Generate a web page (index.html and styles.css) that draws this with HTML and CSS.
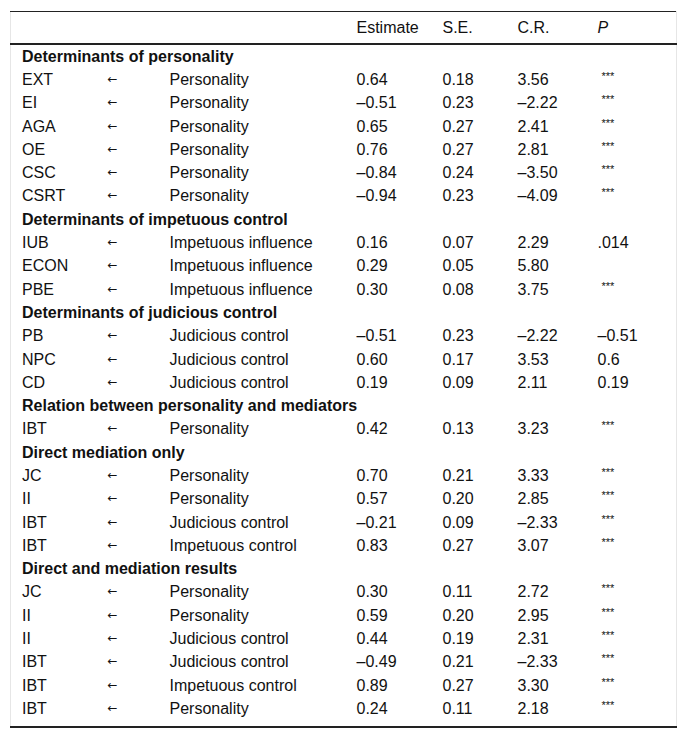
FILE: index.html
```html
<!DOCTYPE html>
<html>
<head>
<meta charset="utf-8">
<link rel="stylesheet" href="styles.css">
</head>
<body>
<div class="wrap">
<table class="t">
<colgroup>
<col class="c1"><col class="c2"><col class="c3"><col class="c4"><col class="c5"><col class="c6"><col class="c7">
</colgroup>
<thead>
<tr><th></th><th></th><th></th><th>Estimate</th><th>S.E.</th><th>C.R.</th><th><i>P</i></th></tr>
</thead>
<tbody>
<tr class="sec"><td colspan="7">Determinants of personality</td></tr>
<tr><td>EXT</td><td><span class="arr">←</span></td><td>Personality</td><td>0.64</td><td>0.18</td><td>3.56</td><td><sup>***</sup></td></tr>
<tr><td>EI</td><td><span class="arr">←</span></td><td>Personality</td><td>–0.51</td><td>0.23</td><td>–2.22</td><td><sup>***</sup></td></tr>
<tr><td>AGA</td><td><span class="arr">←</span></td><td>Personality</td><td>0.65</td><td>0.27</td><td>2.41</td><td><sup>***</sup></td></tr>
<tr><td>OE</td><td><span class="arr">←</span></td><td>Personality</td><td>0.76</td><td>0.27</td><td>2.81</td><td><sup>***</sup></td></tr>
<tr><td>CSC</td><td><span class="arr">←</span></td><td>Personality</td><td>–0.84</td><td>0.24</td><td>–3.50</td><td><sup>***</sup></td></tr>
<tr><td>CSRT</td><td><span class="arr">←</span></td><td>Personality</td><td>–0.94</td><td>0.23</td><td>–4.09</td><td><sup>***</sup></td></tr>
<tr class="sec"><td colspan="7">Determinants of impetuous control</td></tr>
<tr><td>IUB</td><td><span class="arr">←</span></td><td>Impetuous influence</td><td>0.16</td><td>0.07</td><td>2.29</td><td>.014</td></tr>
<tr><td>ECON</td><td><span class="arr">←</span></td><td>Impetuous influence</td><td>0.29</td><td>0.05</td><td>5.80</td><td></td></tr>
<tr><td>PBE</td><td><span class="arr">←</span></td><td>Impetuous influence</td><td>0.30</td><td>0.08</td><td>3.75</td><td><sup>***</sup></td></tr>
<tr class="sec"><td colspan="7">Determinants of judicious control</td></tr>
<tr><td>PB</td><td><span class="arr">←</span></td><td>Judicious control</td><td>–0.51</td><td>0.23</td><td>–2.22</td><td>–0.51</td></tr>
<tr><td>NPC</td><td><span class="arr">←</span></td><td>Judicious control</td><td>0.60</td><td>0.17</td><td>3.53</td><td>0.6</td></tr>
<tr><td>CD</td><td><span class="arr">←</span></td><td>Judicious control</td><td>0.19</td><td>0.09</td><td>2.11</td><td>0.19</td></tr>
<tr class="sec"><td colspan="7">Relation between personality and mediators</td></tr>
<tr><td>IBT</td><td><span class="arr">←</span></td><td>Personality</td><td>0.42</td><td>0.13</td><td>3.23</td><td><sup>***</sup></td></tr>
<tr class="sec"><td colspan="7">Direct mediation only</td></tr>
<tr><td>JC</td><td><span class="arr">←</span></td><td>Personality</td><td>0.70</td><td>0.21</td><td>3.33</td><td><sup>***</sup></td></tr>
<tr><td>II</td><td><span class="arr">←</span></td><td>Personality</td><td>0.57</td><td>0.20</td><td>2.85</td><td><sup>***</sup></td></tr>
<tr><td>IBT</td><td><span class="arr">←</span></td><td>Judicious control</td><td>–0.21</td><td>0.09</td><td>–2.33</td><td><sup>***</sup></td></tr>
<tr><td>IBT</td><td><span class="arr">←</span></td><td>Impetuous control</td><td>0.83</td><td>0.27</td><td>3.07</td><td><sup>***</sup></td></tr>
<tr class="sec"><td colspan="7">Direct and mediation results</td></tr>
<tr><td>JC</td><td><span class="arr">←</span></td><td>Personality</td><td>0.30</td><td>0.11</td><td>2.72</td><td><sup>***</sup></td></tr>
<tr><td>II</td><td><span class="arr">←</span></td><td>Personality</td><td>0.59</td><td>0.20</td><td>2.95</td><td><sup>***</sup></td></tr>
<tr><td>II</td><td><span class="arr">←</span></td><td>Judicious control</td><td>0.44</td><td>0.19</td><td>2.31</td><td><sup>***</sup></td></tr>
<tr><td>IBT</td><td><span class="arr">←</span></td><td>Judicious control</td><td>–0.49</td><td>0.21</td><td>–2.33</td><td><sup>***</sup></td></tr>
<tr><td>IBT</td><td><span class="arr">←</span></td><td>Impetuous control</td><td>0.89</td><td>0.27</td><td>3.30</td><td><sup>***</sup></td></tr>
<tr class="last"><td>IBT</td><td><span class="arr">←</span></td><td>Personality</td><td>0.24</td><td>0.11</td><td>2.18</td><td><sup>***</sup></td></tr>
</tbody>
</table>
</div>
</body>
</html>
```

FILE: styles.css
```css
html, body {
  margin: 0;
  padding: 0;
  background: #fff;
}
.wrap {
  padding: 11px 10px 0 10px;
}
.t {
  width: 666px;
  table-layout: fixed;
  border-collapse: collapse;
  font-family: "Liberation Sans", Arial, sans-serif;
  font-size: 16px;
  color: #111;
  border-left: 1px solid #e6e6e6;
  border-right: 1px solid #e6e6e6;
  border-top: 1px solid #222;
  border-bottom: 2px solid #222;
}
.c1 { width: 86px; }
.c2 { width: 62px; }
.c3 { width: 187px; }
.c4 { width: 86px; }
.c5 { width: 75px; }
.c6 { width: 80px; }
.c7 { width: 90px; }
.t th {
  font-weight: normal;
  text-align: left;
  height: 31px;
  padding: 0 0 0 11px;
  border-bottom: 2px solid #222;
  line-height: 18px;
}
.t td {
  text-align: left;
  padding: 0 0 0 11px;
  height: 23.3px;
  line-height: 18px;
  white-space: nowrap;
  vertical-align: middle;
}
.t tr.last td {
  height: 23.3px;
  padding-bottom: 5px;
}
.sec td {
  font-weight: bold;
}
.arr {
  font-family: "DejaVu Sans", sans-serif;
  font-size: 12px;
  line-height: 0;
  vertical-align: 2px;
}
.t sup {
  font-size: 11px;
  line-height: 0;
  vertical-align: 5px;
  margin-left: 4px;
}
```
